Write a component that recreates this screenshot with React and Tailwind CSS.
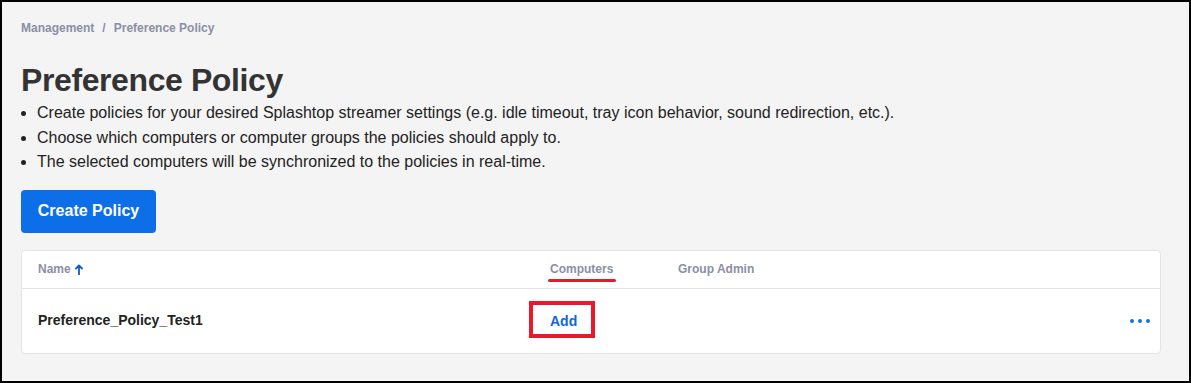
import React from "react";

export default function App() {
  const font = { fontFamily: '"Liberation Sans", Arial, sans-serif' };
  return (
    <div
      style={font}
      className="w-[1191px] h-[383px] border-2 border-black bg-[#f4f4f4] px-[19px] pt-[18px] box-border overflow-hidden"
    >
      <div className="flex items-center text-[12px] font-bold text-[#8b8fa5] leading-[16px]">
        <span>Management</span>
        <span className="mx-[8px]">/</span>
        <span>Preference Policy</span>
      </div>

      <h1 className="mt-[25px] text-[32px] font-bold text-[#333333] leading-[38px] tracking-[-0.4px]">
        Preference Policy
      </h1>

      <ul className="mt-[2px] list-disc pl-[16px] text-[16px] text-[#222222] leading-[24.5px]">
        <li>
          Create policies for your desired Splashtop streamer settings (e.g. idle timeout, tray icon behavior, sound redirection, etc.).
        </li>
        <li>Choose which computers or computer groups the policies should apply to.</li>
        <li>The selected computers will be synchronized to the policies in real-time.</li>
      </ul>

      <button className="mt-[15px] w-[135px] h-[43px] rounded-[4px] bg-[#0d6fe8] text-white text-[16px] font-bold flex items-center justify-center">
        Create Policy
      </button>

      <div className="mt-[17px] w-[1140px] bg-white border border-[#e1e4e9] rounded-[4px]">
        <div className="flex items-center h-[38px] border-b border-[#e1e4e9] pl-[16px] text-[12px] font-bold text-[#8b8fa5]">
          <div className="w-[512px] flex items-center gap-[4px]">
            <span>Name</span>
            <svg width="8" height="11" viewBox="0 0 8 11" fill="none">
              <path d="M4 10.5V1.5M1 4.5L4 1.5L7 4.5" stroke="#1558c9" strokeWidth="1.8" strokeLinecap="round" strokeLinejoin="round" />
            </svg>
          </div>
          <div className="w-[128px]">
            <span className="relative">
              Computers
              <span className="absolute left-[-2px] right-[-3px] top-[17px] h-[3px] rounded-full bg-[#e8192c]" />
            </span>
          </div>
          <div>Group Admin</div>
        </div>
        <div className="flex items-center h-[64px] pl-[16px] pr-[10px]">
          <div className="w-[512px] text-[14px] font-bold text-[#222222]">Preference_Policy_Test1</div>
          <div className="w-[128px]">
            <span className="relative text-[14px] font-bold text-[#0d66e0] leading-[16px]">
              Add
              <span className="absolute left-[-21px] right-[-18px] top-[-12px] bottom-[-9px] border-[4px] border-[#e8192c]" />
            </span>
          </div>
          <div className="flex-1" />
          <div className="flex items-center gap-[4px]">
            <span className="w-[4px] h-[4px] rounded-full bg-[#1473e6]" />
            <span className="w-[4px] h-[4px] rounded-full bg-[#1473e6]" />
            <span className="w-[4px] h-[4px] rounded-full bg-[#1473e6]" />
          </div>
        </div>
      </div>
    </div>
  );
}
